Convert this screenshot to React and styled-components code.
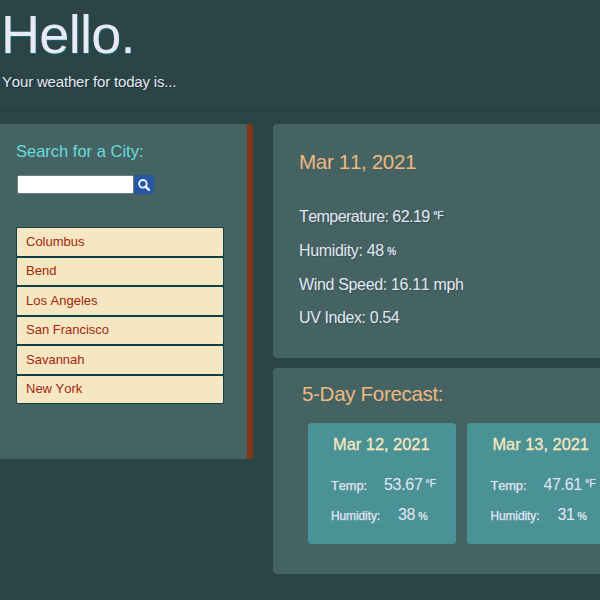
import React from "react";
import styled, { createGlobalStyle } from "styled-components";

const GlobalStyle = createGlobalStyle`
  * { box-sizing: border-box; }
  html, body { margin: 0; padding: 0; background: #2b4446; overflow: hidden; }
  body {
    font-family: "Liberation Sans", Arial, sans-serif;
    font-kerning: none;
    color: #e6e6f5;
  }
  h1, h2, h3, p, ul { margin: 0; padding: 0; font-weight: 400; }
`;

const Page = styled.div`
  width: 600px;
  height: 600px;
  overflow: hidden;
`;

const Header = styled.header`
  height: 111px;
  padding-top: 3px;
  border-bottom: 1px solid #263d3f;
  white-space: nowrap;
`;

const Greeting = styled.h1`
  padding-left: 1px;
  font-size: 54px;
  line-height: 62px;
  letter-spacing: -0.7px;
  color: #e8e8f6;
  text-shadow: 0.5px 0.5px 1px #0f7478;
`;

const Tagline = styled.p`
  padding-left: 2px;
  margin-top: 7px;
  font-size: 15px;
  line-height: 20px;
  letter-spacing: -0.18px;
  text-shadow: 1px 1px 1px #1b3032;
`;

const Columns = styled.main`
  display: flex;
  align-items: flex-start;
  gap: 20px;
  padding-top: 13px;
`;

const Sidebar = styled.aside`
  flex: none;
  width: 253px;
  height: 334.5px;
  padding: 17px 0 0 16px;
  background: #456363;
  border-right: 6.5px solid #83361a;
  border-radius: 0 3px 3px 0;
`;

const SearchTitle = styled.h2`
  font-size: 16.5px;
  line-height: 20px;
  color: #66dcdd;
`;

const SearchForm = styled.form`
  display: flex;
  height: 20px;
  margin: 14px 0 32px;
`;

const SearchInput = styled.input`
  width: 117px;
  height: 19px;
  margin: 0 0 0 1px;
  padding: 0 4px;
  border: 1px solid #6f7f7f;
  border-radius: 2px;
  background: #fff;
  outline: none;
`;

const SearchButton = styled.button`
  display: grid;
  place-items: center;
  width: 20px;
  height: 19px;
  padding: 0;
  border: 0;
  border-radius: 2.5px;
  background: #2558a3;
`;

const CityList = styled.ul`
  width: 208px;
  padding: 1px;
  display: grid;
  grid-template-rows: repeat(6, 1fr);
  gap: 2px;
  height: 177px;
  list-style: none;
  background: #0f4146;
  border-radius: 2px;
`;

const City = styled.li`
  display: flex;
  align-items: center;
  padding-left: 9px;
  font-size: 13px;
  line-height: 18px;
  color: #a5260c;
  background: #f4e7c2;
  border-radius: 1px;
`;

const Content = styled.div`
  flex: none;
  display: grid;
  gap: 10px;
  width: 420px;
`;

const Panel = styled.section`
  height: ${(p) => p.$height}px;
  background: #456363;
  border-radius: 4px;
  white-space: nowrap;
`;

const PanelTitle = styled.h2`
  padding: ${(p) => p.$pad};
  font-size: 20.6px;
  line-height: 24px;
  letter-spacing: -0.35px;
  color: #eeb881;
`;

const Readings = styled.div`
  display: grid;
  grid-auto-rows: 33.75px;
  padding: 26px 0 0 26px;
`;

const Reading = styled.p`
  font-size: 16px;
  line-height: 34px;
  letter-spacing: ${(p) => p.$tracking ?? -0.5}px;
  text-shadow: 1px 1px 1px rgba(25, 62, 62, 0.45);
`;

const Unit = styled.span`
  position: relative;
  top: ${(p) => p.$shift || 0}px;
  margin-left: ${(p) => p.$gap}px;
  font-size: ${(p) => p.$size || 10}px;
  letter-spacing: 0;
  -webkit-text-stroke: 0.25px currentColor;
  line-height: 1;
`;

const Cards = styled.div`
  display: flex;
  gap: 11px;
  padding: 17px 0 0 35px;
`;

const Card = styled.article`
  flex: none;
  width: 148.4px;
  height: 121px;
  padding-top: 11px;
  background: linear-gradient(90deg, #489498, #4a9295 10%, #4a9295 90%, #489498);
  border-radius: 4px;
`;

const CardDate = styled.h3`
  padding-left: 25px;
  font-size: 16.4px;
  line-height: 20px;
  color: #f7e8bf;
  -webkit-text-stroke: 0.3px currentColor;
`;

const CardRow = styled.div`
  display: flex;
  align-items: baseline;
  height: 30px;
  line-height: 30px;
  padding-left: 23px;
`;

const CardRows = styled.div`
  padding-top: 16px;
`;

const Label = styled.span`
  flex: none;
  width: ${(p) => p.$width}px;
  font-size: ${(p) => p.$size}px;
  letter-spacing: -0.05px;
  -webkit-text-stroke: 0.25px currentColor;
`;

const Value = styled.span`
  font-size: 16px;
  letter-spacing: -0.3px;
`;

const cities = ["Columbus", "Bend", "Los Angeles", "San Francisco", "Savannah", "New York"];

const forecast = [
  { date: "Mar 12, 2021", temp: "53.67", humidity: "38" },
  { date: "Mar 13, 2021", temp: "47.61", humidity: "31" },
];

function SearchIcon() {
  return (
    <svg width="12" height="12" viewBox="0 0 12 12" fill="none" stroke="#f0f0fb" strokeWidth="1.9">
      <circle cx="4.9" cy="4.8" r="3.8" />
      <path d="M7.7 7.7L10.9 10.9" strokeWidth="2.4" strokeLinecap="round" />
    </svg>
  );
}

export default function App() {
  return (
    <Page>
      <GlobalStyle />
      <Header>
        <Greeting>Hello.</Greeting>
        <Tagline>Your weather for today is...</Tagline>
      </Header>
      <Columns>
        <Sidebar>
          <SearchTitle>Search for a City:</SearchTitle>
          <SearchForm>
            <SearchInput aria-label="City" />
            <SearchButton type="button" aria-label="Search">
              <SearchIcon />
            </SearchButton>
          </SearchForm>
          <CityList>
            {cities.map((name) => (
              <City key={name}>{name}</City>
            ))}
          </CityList>
        </Sidebar>
        <Content>
          <Panel $height={234}>
            <PanelTitle $pad="26px 0 0 26px">Mar 11, 2021</PanelTitle>
            <Readings>
              <Reading $tracking={-0.55}>
                Temperature: 62.19<Unit $gap={3.5} $shift={-3.5} $size={10.5}>°F</Unit>
              </Reading>
              <Reading $tracking={-0.35}>
                Humidity: 48<Unit $gap={3.5} $shift={-1}>%</Unit>
              </Reading>
              <Reading $tracking={-0.34}>Wind Speed: 16.11 mph</Reading>
              <Reading $tracking={-0.4}>UV Index: 0.54</Reading>
            </Readings>
          </Panel>
          <Panel $height={206}>
            <PanelTitle $pad="14px 0 0 29px">5-Day Forecast:</PanelTitle>
            <Cards>
              {forecast.map((day) => (
                <Card key={day.date}>
                  <CardDate>{day.date}</CardDate>
                  <CardRows>
                    <CardRow>
                      <Label $width={53} $size={12.8}>Temp:</Label>
                      <Value>{day.temp}</Value>
                      <Unit $gap={3} $shift={-3} $size={10.5}>°F</Unit>
                    </CardRow>
                    <CardRow>
                      <Label $width={67} $size={11.9}>Humidity:</Label>
                      <Value>{day.humidity}</Value>
                      <Unit $gap={3} $size={10.5}>%</Unit>
                    </CardRow>
                  </CardRows>
                </Card>
              ))}
            </Cards>
          </Panel>
        </Content>
      </Columns>
    </Page>
  );
}
